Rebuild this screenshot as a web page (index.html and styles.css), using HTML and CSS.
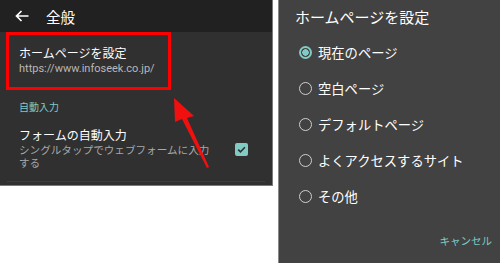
FILE: index.html
```html
<!DOCTYPE html>
<html lang="ja">
<head>
    <meta charset="UTF-8">
    <meta name="viewport" content="width=device-width, initial-scale=1.0">
    <title>ホームページを設定</title>
    <link rel="stylesheet" href="styles.css">
</head>
<body>
    <div class="page">
        <div class="settings">
            <div class="toolbar">
                <svg class="back" width="14" height="12" viewBox="0 0 14 12">
                    <path d="M13.5 6H1.5M6.5 1L1.5 6l5 5" fill="none" stroke="#fff" stroke-width="1.7"/>
                </svg>
                <span class="toolbar-title">全般</span>
            </div>
            <div class="pref pref-marked">
                <div class="pref-title">ホームページを設定</div>
                <div class="pref-url">https://www.infoseek.co.jp/</div>
            </div>
            <div class="category">自動入力</div>
            <div class="pref pref-check">
                <div class="pref-text">
                    <div class="pref-title">フォームの自動入力</div>
                    <div class="pref-summary">シングルタップでウェブフォームに入力する</div>
                </div>
                <div class="checkbox">
                    <svg width="13" height="13" viewBox="0 0 13 13">
                        <path d="M3.2 6.6l2.3 2.3 4.4-4.6" fill="none" stroke="#303030" stroke-width="1.6"/>
                    </svg>
                </div>
            </div>
            <div class="divider"></div>
            <svg class="pointer" width="60" height="80" viewBox="0 0 60 80">
                <polygon points="5,0 25,18 18,20 40,69 38,70 13,21 6,24" fill="#f01010"/>
            </svg>
        </div>
        <div class="dialog">
            <div class="dialog-title">ホームページを設定</div>
            <ul class="choices">
                <li class="choice checked"><span class="radio"></span>現在のページ</li>
                <li class="choice"><span class="radio"></span>空白ページ</li>
                <li class="choice"><span class="radio"></span>デフォルトページ</li>
                <li class="choice"><span class="radio"></span>よくアクセスするサイト</li>
                <li class="choice"><span class="radio"></span>その他</li>
            </ul>
            <div class="dialog-actions">
                <span class="cancel">キャンセル</span>
            </div>
        </div>
    </div>
</body>
</html>
```

FILE: styles.css
```css
body {
    margin: 0;
    background-color: #fff;
    font-family: "Noto Sans CJK JP", "Noto Sans", sans-serif;
    color: #fff;
}

.page {
    display: flex;
    align-items: flex-start;
    gap: 5px;
    height: 263px;
}

.settings {
    position: relative;
    width: 272px;
    background-color: #303030;
    border-right: 1px solid #7a7a7a;
    border-bottom: 1px solid #7a7a7a;
}

.toolbar {
    display: flex;
    align-items: center;
    height: 32px;
    padding-left: 15px;
    background-color: #212121;
}

.toolbar-title {
    margin-left: 17px;
    font-size: 14.5px;
}

.pref-marked {
    width: 139px;
    margin-left: 6px;
    padding: 9px 10px 10px;
    border: 3px solid #f00;
}

.pref-title {
    font-size: 12px;
    line-height: 17px;
}

.pref-url {
    font-family: Roboto, sans-serif;
    font-size: 11px;
    line-height: 16px;
    color: #b8b8b8;
}

.category {
    padding: 10px 0 0 19px;
    font-size: 10px;
    line-height: 14px;
    color: #80cbc4;
}

.pref-check {
    display: flex;
    align-items: center;
    padding: 12px 24px 0 19px;
}

.pref-text {
    width: 196px;
    flex: none;
}

.pref-summary {
    font-size: 10.6px;
    line-height: 13px;
    color: #a8a8a8;
}

.checkbox {
    width: 13px;
    height: 13px;
    margin-left: auto;
    margin-top: 3px;
    border-radius: 2px;
    background-color: #80cbc4;
}

.checkbox svg {
    display: block;
}

.divider {
    height: 1px;
    margin: 12px 7px 3px;
    background-color: #3d3d3d;
}

.pointer {
    position: absolute;
    left: 169px;
    top: 98px;
}

.dialog {
    flex: 1;
    height: 263px;
    display: flex;
    flex-direction: column;
    background-color: #424242;
    border-left: 1px solid #8a8a8a;
}

.dialog-title {
    padding: 7px 0 0 16px;
    font-size: 15px;
    line-height: 20px;
}

.choices {
    list-style: none;
    margin: 0;
    padding: 7px 0 0 20px;
}

.choice {
    display: flex;
    align-items: center;
    height: 36px;
    font-size: 13.3px;
}

.radio {
    box-sizing: border-box;
    width: 13px;
    height: 13px;
    margin-right: 6px;
    border: 1.5px solid #cfcfcf;
    border-radius: 50%;
}

.checked .radio {
    border: 2px solid #80cbc4;
    background: radial-gradient(circle, #80cbc4 3px, transparent 3.5px);
}

.dialog-actions {
    margin-top: auto;
    padding: 0 8px 13px 0;
    text-align: right;
}

.cancel {
    font-size: 10.5px;
    color: #80cbc4;
}
```
